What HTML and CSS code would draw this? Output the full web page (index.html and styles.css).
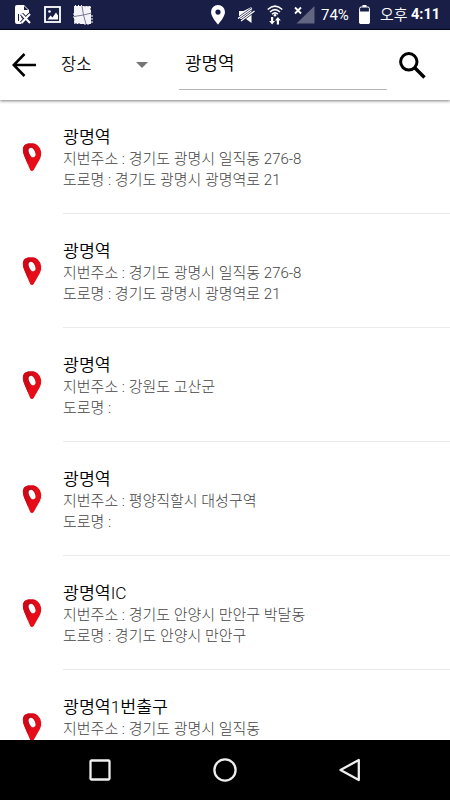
FILE: index.html
```html
<!DOCTYPE html>
<html lang="ko">
<head>
    <meta charset="UTF-8">
    <meta name="viewport" content="width=device-width, initial-scale=1.0">
    <title>장소 검색</title>
    <link rel="stylesheet" href="styles.css">
</head>
<body>

    <!-- pin shared by every result -->
    <svg class="defs" width="0" height="0">
        <symbol id="pin" viewBox="0 0 20 28">
            <path d="M.9 7C.9 2.500 3.500 .4 7.500 .4h3.500c4.500.3 8.200 5 8.200 9.600 0 4-1.200 6-2.700 8.500L11.700 27c-.8 1.200-2.700 1.200-3.500 0L2.500 13.500C1.500 11 .9 9 .9 7z" fill="#e60d19"/>
            <path d="M.9 7C.9 2.500 3.500 .4 7.500 .4h3.500c2 .2 4 1.400 5.500 3C11 1.500 5.500 2 5 6.500c-.3 4 2 6.500 3 9.500L5.800 21 2.500 13.500C1.500 11 .9 9 .9 7z" fill="#d20816"/>
            <ellipse cx="9.500" cy="8.800" rx="4" ry="6" transform="rotate(-24 9.500 8.800)" fill="#b80c19"/>
            <ellipse cx="10.100" cy="9.500" rx="2.900" ry="5" transform="rotate(-24 10.100 9.500)" fill="#fff"/>
        </symbol>
    </svg>

    <div class="status-bar">
        <div class="notifications">
            <svg width="18" height="20" viewBox="0 0 18 20">
                <path d="M3 0h7l5 5v6l-3 2-3-3-2 2 3 3-3 4H3a2 2 0 0 1-2-2V2a2 2 0 0 1 2-2z" fill="#fff"/>
                <path d="M10 1v4h4z" fill="#191e46"/>
                <path d="M4.500 9v7" stroke="#191e46" stroke-width="1"/>
                <path d="M7.500 9l8.500 9M16 9l-8.500 9" stroke="#191e46" stroke-width="4"/>
                <path d="M7.500 9l8.500 9M16 9l-8.500 9" stroke="#fff" stroke-width="2"/>
            </svg>
            <svg width="17" height="17" viewBox="0 0 17 17">
                <rect x="1" y="1" width="15" height="15" fill="none" stroke="#fff" stroke-width="1.800"/>
                <path d="M3.500 13.500l3-4 2 2 3.500-5 2 3v4z" fill="#fff"/>
                <circle cx="5.500" cy="5.500" r="1.300" fill="#fff"/>
            </svg>
            <svg width="20" height="20" viewBox="0 0 20 20">
                <path d="M1 1h17v18H1z" fill="#f4f4f8"/>
                <path d="M0 9h2M0 12h1M18 11h2M18 14h2M18 17h2M2.500 0v2M5.500 0v2M8.500 0v2M12 18v2M15 18v2" stroke="#fff"/>
                <path d="M9 1l1.500 9L13 19M1 11.500l9.500-1.500 8-2" stroke="#777a94" fill="none" stroke-width="1"/>
                <path d="M12 0v1.500M15 0v1.500M18 0v2M3 18v2M6 18v2M0 15h1.500M0 18h1.500M17 4h2" stroke="#191e46"/>
            </svg>
        </div>
        <div class="system">
            <svg class="location" width="14" height="20" viewBox="0 0 14 20">
                <path fill-rule="evenodd" d="M7 0a7 7 0 0 0-7 7c0 5 7 12.500 7 12.500S14 12 14 7a7 7 0 0 0-7-7zm0 4.500a2.600 2.600 0 1 1 0 5.200 2.600 2.600 0 0 1 0-5.200z" fill="#fff"/>
            </svg>
            <svg class="mute" width="18" height="18" viewBox="0 0 18 18">
                <path d="M2 5h4.500L14.500 1v16L9 13H2z" fill="#fff"/>
                <path d="M1 12.500L15 2.500M4 15L17.500 5" stroke="#191e46" stroke-width="2.600"/>
                <path d="M1 12.500L15 2.500M4 15L17.500 5" stroke="#fff" stroke-width="1.300"/>
            </svg>
            <svg class="wifi" width="16" height="20" viewBox="0 0 16 20">
                <g fill="none" stroke="#fff" stroke-width="1.500">
                    <path d="M.7 4.500Q8-2.300 15.300 4.500"/>
                    <path d="M3 7Q8 2.300 13 7"/>
                    <path d="M5 9.300Q8 6.500 11 9.300"/>
                </g>
                <circle cx="8" cy="10.300" r="1.300" fill="#fff"/>
                <path d="M4 12h2.200v4H8l-2.900 3.500L2.200 16H4zM9.800 19.500H12v-4h1.800L10.900 12 8 15.500h1.800z" fill="#fff"/>
            </svg>
            <svg class="signal" width="21" height="18" viewBox="0 0 21 18">
                <path d="M20.500 0v17.500H2.500z" fill="#626680"/>
                <path d="M1 1.500l6 6M7 1.500l-6 6" stroke="#fff" stroke-width="1.800"/>
            </svg>
            <span class="percent">74%</span>
            <svg class="battery" width="11" height="19" viewBox="0 0 11 19">
                <path d="M3.500 0h4v2h-4z" fill="#fff"/>
                <rect x=".6" y="2" width="9.800" height="16.400" rx="1.500" fill="#191e46" stroke="#fff"/>
                <path d="M.1 6.500h10.800v11a1.400 1.400 0 0 1-1.400 1.400h-8A1.400 1.400 0 0 1 .1 17.500z" fill="#fff"/>
            </svg>
            <span class="ampm">오후</span>
            <span class="time">4:11</span>
        </div>
    </div>

    <div class="toolbar">
        <svg class="back" width="24" height="24" viewBox="0 0 24 24">
            <path d="M12.500 1L1.700 12l10.800 11M1.700 12H24" fill="none" stroke="#000" stroke-width="2.600"/>
        </svg>
        <div class="category">
            <span>장소</span>
            <svg width="12" height="6" viewBox="0 0 12 6"><path d="M0 0h12L6 6z" fill="#757575"/></svg>
        </div>
        <div class="search-field">광명역</div>
        <svg class="search" width="27" height="27" viewBox="0 0 27 27">
            <circle cx="9.800" cy="9.800" r="8.200" fill="none" stroke="#000" stroke-width="3"/>
            <path d="M15.500 15.500L25.500 25.500" stroke="#000" stroke-width="3.400"/>
        </svg>
    </div>

    <div class="results">
        <div class="result">
            <svg class="pin"><use href="#pin"/></svg>
            <div class="info">
                <div class="name">광명역</div>
                <div class="address">지번주소 : 경기도 광명시 일직동 276-8</div>
                <div class="address road">도로명 : 경기도 광명시 광명역로 21</div>
            </div>
        </div>
        <div class="result">
            <svg class="pin"><use href="#pin"/></svg>
            <div class="info">
                <div class="name">광명역</div>
                <div class="address">지번주소 : 경기도 광명시 일직동 276-8</div>
                <div class="address road">도로명 : 경기도 광명시 광명역로 21</div>
            </div>
        </div>
        <div class="result">
            <svg class="pin"><use href="#pin"/></svg>
            <div class="info">
                <div class="name">광명역</div>
                <div class="address">지번주소 : 강원도 고산군</div>
                <div class="address road">도로명 :</div>
            </div>
        </div>
        <div class="result">
            <svg class="pin"><use href="#pin"/></svg>
            <div class="info">
                <div class="name">광명역</div>
                <div class="address">지번주소 : 평양직할시 대성구역</div>
                <div class="address road">도로명 :</div>
            </div>
        </div>
        <div class="result">
            <svg class="pin"><use href="#pin"/></svg>
            <div class="info">
                <div class="name">광명역IC</div>
                <div class="address">지번주소 : 경기도 안양시 만안구 박달동</div>
                <div class="address road">도로명 : 경기도 안양시 만안구</div>
            </div>
        </div>
        <div class="result">
            <svg class="pin"><use href="#pin"/></svg>
            <div class="info">
                <div class="name">광명역1번출구</div>
                <div class="address">지번주소 : 경기도 광명시 일직동</div>
            </div>
        </div>
    </div>

    <div class="nav-bar">
        <svg width="24" height="24" viewBox="0 0 24 24"><rect x="2.500" y="2.500" width="19" height="19" rx="1" fill="none" stroke="#eee" stroke-width="2.300"/></svg>
        <svg width="24" height="24" viewBox="0 0 24 24"><circle cx="12" cy="12" r="10.600" fill="none" stroke="#eee" stroke-width="2.300"/></svg>
        <svg width="24" height="24" viewBox="0 0 24 24"><path d="M20.800 2v20L2.500 12z" fill="none" stroke="#eee" stroke-width="2.300" stroke-linejoin="round"/></svg>
    </div>

</body>
</html>
```
FILE: styles.css
```css
* {
    box-sizing: border-box;
}

body {
    margin: 0;
    height: 800px;
    display: flex;
    flex-direction: column;
    background-color: #fff;
    font-family: Roboto, "Noto Sans CJK KR", sans-serif;
    overflow: hidden;
}

svg {
    display: block;
    flex: none;
}

.defs {
    position: absolute;
}

.status-bar {
    flex: none;
    height: 30px;
    padding: 0 10px 0 14px;
    display: flex;
    justify-content: space-between;
    align-items: center;
    background-color: #191e46;
    border-bottom: 1px solid #05081d;
    color: #fff;
    font-size: 15px;
    line-height: 32px;
}

.notifications, .system {
    display: flex;
    align-items: center;
}
.notifications { gap: 12px; }

.location { margin-right: 12px; }
.wifi { margin-left: 12px; }
.signal { margin-left: 11px; }
.percent { width: 38px; margin-left: 6px; white-space: nowrap; }
.ampm { width: 31px; margin-left: 10px; font-weight: 350; white-space: nowrap; }
.time { width: 29px; font-size: 14.500px; font-weight: 700; white-space: nowrap; }

.toolbar {
    position: relative;
    flex: none;
    height: 70px;
    padding-left: 12px;
    display: flex;
    align-items: center;
    background-color: #fff;
    box-shadow: 0 1px 3px rgba(0, 0, 0, 0.5);
}

.category {
    width: 87px;
    margin-left: 25px;
    display: flex;
    justify-content: space-between;
    align-items: center;
    color: #111;
    font-size: 16.500px;
    font-weight: 350;
    line-height: 24px;
}

.search-field {
    width: 208px;
    height: 50px;
    margin: 0 12px 0 31px;
    padding-left: 6px;
    border-bottom: 1px solid #b5b5b5;
    color: #000;
    font-size: 18px;
    font-weight: 350;
    line-height: 48px;
}

.results {
    flex: 1;
    min-height: 0;
    overflow: hidden;
}

.result {
    height: 114px;
    padding-left: 22px;
    display: flex;
}

.pin {
    width: 20px;
    height: 28px;
    margin-top: 43px;
}

.info {
    flex: 1;
    margin-left: 21px;
    padding-top: 26px;
    border-bottom: 1px solid #e9e9e9;
    white-space: nowrap;
}

.name {
    height: 23px;
    color: #000;
    font-size: 17.300px;
    font-weight: 350;
    line-height: 22px;
}

.address {
    height: 20px;
    color: #444;
    font-size: 15px;
    font-weight: 300;
    line-height: 20px;
}

.road { line-height: 22px; }

.nav-bar {
    flex: none;
    height: 60px;
    padding: 0 88px;
    display: flex;
    justify-content: space-between;
    align-items: center;
    background-color: #000;
}
```
